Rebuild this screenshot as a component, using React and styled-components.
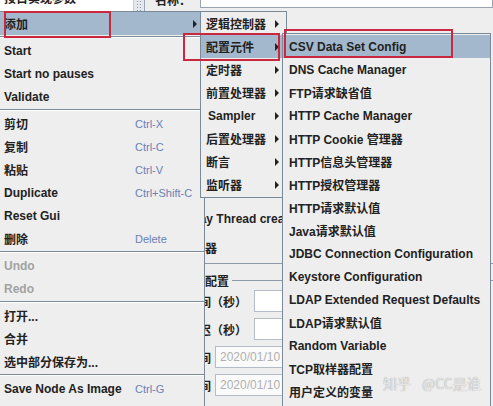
import React from "react";
import styled, { createGlobalStyle } from "styled-components";

const GlobalStyle = createGlobalStyle`
  html, body {
    margin: 0;
    padding: 0;
    background: #eeeeee;
  }
  body {
    font-family: "Liberation Sans", Arial, "Noto Sans CJK SC", sans-serif;
  }
`;

const Screen = styled.div`
  position: relative;
  width: 493px;
  height: 406px;
  overflow: hidden;
  background: #eeeeee;
  color: #222;
  font-family: "Liberation Sans", Arial, "Noto Sans CJK SC", sans-serif;
`;

/* ---------- the JMeter window behind the menus ---------- */

const Backdrop = styled.div`
  display: flex;
  height: 100%;
`;

const TreePane = styled.div`
  width: 133px;
  flex-shrink: 0;
  background: #fff;
`;

const TreeRow = styled.div`
  margin-top: -9px;
  padding-left: 4px;
  font-size: 12px;
  line-height: 16px;
  font-weight: bold;
  white-space: nowrap;
`;

const ScrollTrack = styled.div`
  width: 10px;
  flex-shrink: 0;
  background: #e4e8ee;
  border-left: 1px solid #c4ccd6;
  border-right: 1px solid #9aa6b4;
`;

const ScrollGrip = styled.div`
  height: 12px;
  margin: 0 2px;
  background-image: radial-gradient(#8c98a8 0.8px, transparent 1px);
  background-size: 3px 3px;
`;

const Editor = styled.div`
  flex: 1;
  padding-left: 10px;
  display: flex;
  flex-direction: column;
  min-width: 0;
`;

const NameRow = styled.div`
  display: flex;
  align-items: flex-end;
  height: 9px;
`;

const NameLabel = styled.span`
  width: 45px;
  font-size: 12px;
  font-weight: bold;
  line-height: 14px;
  margin-bottom: 1px;
  white-space: nowrap;
`;

const NameField = styled.div`
  flex: 1;
  height: 20px;
  margin-bottom: 1px;
  background: #fff;
  border: 1px solid #9aa4b0;
  font-size: 12px;
  line-height: 16px;
  padding-left: 3px;
  white-space: nowrap;
  overflow: hidden;
`;

const Body = styled.div`
  padding: 196px 0 0 10px;
  display: flex;
  flex-direction: column;
`;

const CheckRow = styled.div`
  display: flex;
  align-items: center;
  gap: 3px;
  height: 28px;
  font-size: 12px;
  font-weight: bold;
  white-space: nowrap;
`;

const CheckBox = styled.span`
  width: 11px;
  height: 11px;
  flex-shrink: 0;
  background: #fff;
  border: 1px solid #8a96a6;
`;

const Divider = styled.div`
  margin-top: 2px;
  border-top: 1px solid #8e9aab;
`;

const Frame = styled.div`
  margin-left: -4px;
  border-left: 1px solid #8e9aab;
`;

const LegendRow = styled.div`
  display: flex;
  align-items: center;
  height: 13px;
  margin-top: 10px;
  font-size: 12px;
  font-weight: bold;
  white-space: nowrap;
  &::before,
  &::after {
    content: "";
    border-top: 1px solid #8e9aab;
  }
  &::before {
    width: 6px;
    margin-right: 1px;
  }
  &::after {
    flex: 1;
    margin-left: 3px;
  }
`;

const FieldRow = styled.div`
  display: flex;
  align-items: center;
  height: 28px;
  padding-left: 1px;
`;

const FieldLabel = styled.span`
  font-size: 12px;
  font-weight: bold;
  white-space: nowrap;
  margin-right: ${(p) => p.$gap}px;
`;

const TextField = styled.div`
  width: 220px;
  height: 22px;
  box-sizing: border-box;
  flex-shrink: 0;
  border: 1px solid #b4bcc6;
  background: ${(p) => (p.$muted ? "#fafafa" : "#fff")};
  color: #b0b0b0;
  font-size: 12px;
  line-height: 20px;
  padding-left: 4px;
`;

/* ---------- popup menus ---------- */

const Popup = styled.div`
  position: absolute;
  left: ${(p) => p.$left}px;
  top: ${(p) => p.$top}px;
  width: ${(p) => p.$width}px;
  box-sizing: border-box;
  background: #eeeeee;
  border: 1px solid #7a8a99;
  padding: ${(p) => p.$pad || "0 0 2px"};
`;

const Item = styled.div`
  display: grid;
  grid-template-columns: ${(p) => p.$cols};
  align-items: center;
  height: 23px;
  padding: 0 7px 0 ${(p) => p.$indent}px;
  background: ${(p) => (p.$active ? "#a3b8cc" : "transparent")};
  color: ${(p) => (p.$disabled ? "#a2a2a2" : "#222")};
  font-size: 12px;
  font-weight: bold;
  white-space: nowrap;
`;

const Shortcut = styled.span`
  font-size: 11px;
  font-weight: normal;
  color: #6a80b4;
`;

const Arrow = styled.span`
  width: 0;
  height: 0;
  justify-self: end;
  border-left: 4px solid #222;
  border-top: 4px solid transparent;
  border-bottom: 4px solid transparent;
`;

const Separator = styled.div`
  margin: 1px 0;
  border-top: 1px solid #7a8a99;
  border-bottom: 1px solid #fff;
`;

/* ---------- overlays ---------- */

const Mark = styled.div`
  position: absolute;
  left: ${(p) => p.$x}px;
  top: ${(p) => p.$y}px;
  width: ${(p) => p.$w}px;
  height: ${(p) => p.$h}px;
  box-sizing: border-box;
  border: 2px solid #c9283e;
`;

const Watermark = styled.div`
  position: absolute;
  left: 383px;
  top: 373px;
  display: flex;
  gap: 11px;
  font-family: "Noto Sans CJK SC", sans-serif;
  font-size: 14px;
  line-height: 20px;
  color: #e6e6e6;
  text-shadow: 0 0 1px #8e8e8e;
  white-space: nowrap;
`;

const mainItems = [
  { label: "添加", sub: true, active: true },
  "-",
  { label: "Start" },
  { label: "Start no pauses" },
  { label: "Validate" },
  "-",
  { label: "剪切", key: "Ctrl-X" },
  { label: "复制", key: "Ctrl-C" },
  { label: "粘贴", key: "Ctrl-V" },
  { label: "Duplicate", key: "Ctrl+Shift-C" },
  { label: "Reset Gui" },
  { label: "删除", key: "Delete" },
  "-",
  { label: "Undo", disabled: true },
  { label: "Redo", disabled: true },
  "-",
  { label: "打开..." },
  { label: "合并" },
  { label: "选中部分保存为..." },
  "-",
  { label: "Save Node As Image", key: "Ctrl-G" },
];

const addItems = [
  "逻辑控制器",
  "配置元件",
  "定时器",
  "前置处理器",
  "Sampler",
  "后置处理器",
  "断言",
  "监听器",
];

const configItems = [
  "CSV Data Set Config",
  "DNS Cache Manager",
  "FTP请求缺省值",
  "HTTP Cache Manager",
  "HTTP Cookie 管理器",
  "HTTP信息头管理器",
  "HTTP授权管理器",
  "HTTP请求默认值",
  "Java请求默认值",
  "JDBC Connection Configuration",
  "Keystore Configuration",
  "LDAP Extended Request Defaults",
  "LDAP请求默认值",
  "Random Variable",
  "TCP取样器配置",
  "用户定义的变量",
];

export default function App() {
  return (
    <Screen>
      <GlobalStyle />
      <Backdrop>
        <TreePane>
          <TreeRow>按日实现参数</TreeRow>
        </TreePane>
        <ScrollTrack>
          <ScrollGrip />
        </ScrollTrack>
        <Editor>
          <NameRow>
            <NameLabel>名称：</NameLabel>
            <NameField>云同步显示</NameField>
          </NameRow>
          <Body>
            <CheckRow>
              <CheckBox />
              Delay Thread creation until needed
            </CheckRow>
            <CheckRow>
              <CheckBox />
              调度器
            </CheckRow>
            <Divider />
            <Frame>
              <LegendRow>调度器配置</LegendRow>
              <FieldRow>
                <FieldLabel $gap={7}>持续时间（秒）</FieldLabel>
                <TextField />
              </FieldRow>
              <FieldRow>
                <FieldLabel $gap={7}>启动延迟（秒）</FieldLabel>
                <TextField />
              </FieldRow>
              <FieldRow>
                <FieldLabel $gap={4}>启动时间</FieldLabel>
                <TextField $muted>2020/01/10 17:30:00</TextField>
              </FieldRow>
              <FieldRow>
                <FieldLabel $gap={4}>结束时间</FieldLabel>
                <TextField $muted>2020/01/10 17:30:00</TextField>
              </FieldRow>
            </Frame>
          </Body>
        </Editor>
      </Backdrop>

      <Popup $left={-1} $top={11} $width={206} $pad="0 0 6px">
        {mainItems.map((it, i) =>
          it === "-" ? (
            <Separator key={i} />
          ) : (
            <Item
              key={i}
              $cols="131px 1fr auto"
              $indent={4}
              $active={it.active}
              $disabled={it.disabled}
            >
              <span>{it.label}</span>
              <Shortcut>{it.key}</Shortcut>
              {it.sub ? <Arrow /> : <span />}
            </Item>
          )
        )}
      </Popup>

      <Popup $left={200} $top={11} $width={87} $pad="0 0 1px">
        {addItems.map((label) => (
          <Item
            key={label}
            $cols="1fr auto"
            $indent={label === "Sampler" ? 7 : 5}
            $active={label === "配置元件"}
          >
            <span>{label}</span>
            <Arrow />
          </Item>
        ))}
      </Popup>

      <Popup $left={282} $top={33} $width={209} $pad="1px 0 4px">
        {configItems.map((label, i) => (
          <Item key={label} $cols="1fr" $indent={6} $active={i === 0}>
            <span>{label}</span>
          </Item>
        ))}
      </Popup>

      <Mark $x={4} $y={11} $w={107} $h={27} />
      <Mark $x={183} $y={33} $w={97} $h={28} />
      <Mark $x={284} $y={29} $w={169} $h={29} />

      <Watermark>
        <span>知乎</span>
        <span>@CC是谁</span>
      </Watermark>
    </Screen>
  );
}
